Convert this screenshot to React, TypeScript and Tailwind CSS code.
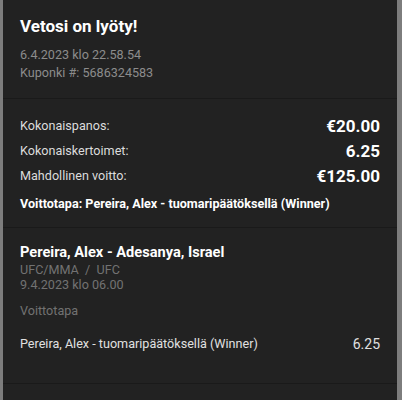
const SUMMARY = [
  { label: "Kokonaispanos:", value: "€20.00" },
  { label: "Kokonaiskertoimet:", value: "6.25" },
  { label: "Mahdollinen voitto:", value: "€125.00" },
];

export default function App() {
  return (
    <div className="h-[400px] w-[402px] overflow-hidden bg-[#7d7d7d] px-[3px]" style={{ fontFamily: "Roboto, 'Liberation Sans', sans-serif" }}>
      <div className="h-full w-[394px] bg-[#222222]">
        {/* Header */}
        <div className="border-b border-[#1a1a1a] px-[17px] pb-[16px] pt-[14px]">
          <p className="text-[17px] font-bold leading-[24px] text-white">Vetosi on lyöty!</p>
          <p className="mt-[8px] text-[12.6px] leading-[18px] text-[#8c8c8c]">6.4.2023 klo 22.58.54</p>
          <p className="text-[12.6px] leading-[18px] text-[#8c8c8c]">Kuponki #: 5686324583</p>
        </div>

        {/* Summary */}
        <div className="border-b border-[#1a1a1a] px-[17px] pb-[14px] pt-[15px]">
          {SUMMARY.map(s => (
            <div key={s.label} className="flex h-[25px] items-center justify-between">
              <span className="text-[12.6px] text-[#dcdcdc]">{s.label}</span>
              <span className="text-[17px] font-bold text-white">{s.value}</span>
            </div>
          ))}
          <p className="mt-[6px] text-[12.6px] font-bold leading-[18px] text-white">Voittotapa: Pereira, Alex - tuomaripäätöksellä (Winner)</p>
        </div>

        {/* Event */}
        <div className="border-b border-[#1a1a1a] px-[17px] pb-[29px] pt-[14px]">
          <p className="text-[14.6px] font-bold leading-[20px] text-white">Pereira, Alex - Adesanya, Israel</p>
          <p className="text-[12.6px] leading-[15px] text-[#727272]">UFC/MMA&nbsp; / &nbsp;UFC</p>
          <p className="text-[12.6px] leading-[15px] text-[#727272]">9.4.2023 klo 06.00</p>
          <p className="mt-[11px] text-[12.6px] leading-[15px] text-[#727272]">Voittotapa</p>
          <div className="mt-[16px] flex h-[20px] items-center justify-between">
            <span className="text-[12.6px] text-[#e0e0e0]">Pereira, Alex - tuomaripäätöksellä (Winner)</span>
            <span className="text-[14px] text-[#e0e0e0]">6.25</span>
          </div>
        </div>
      </div>
    </div>
  );
}
